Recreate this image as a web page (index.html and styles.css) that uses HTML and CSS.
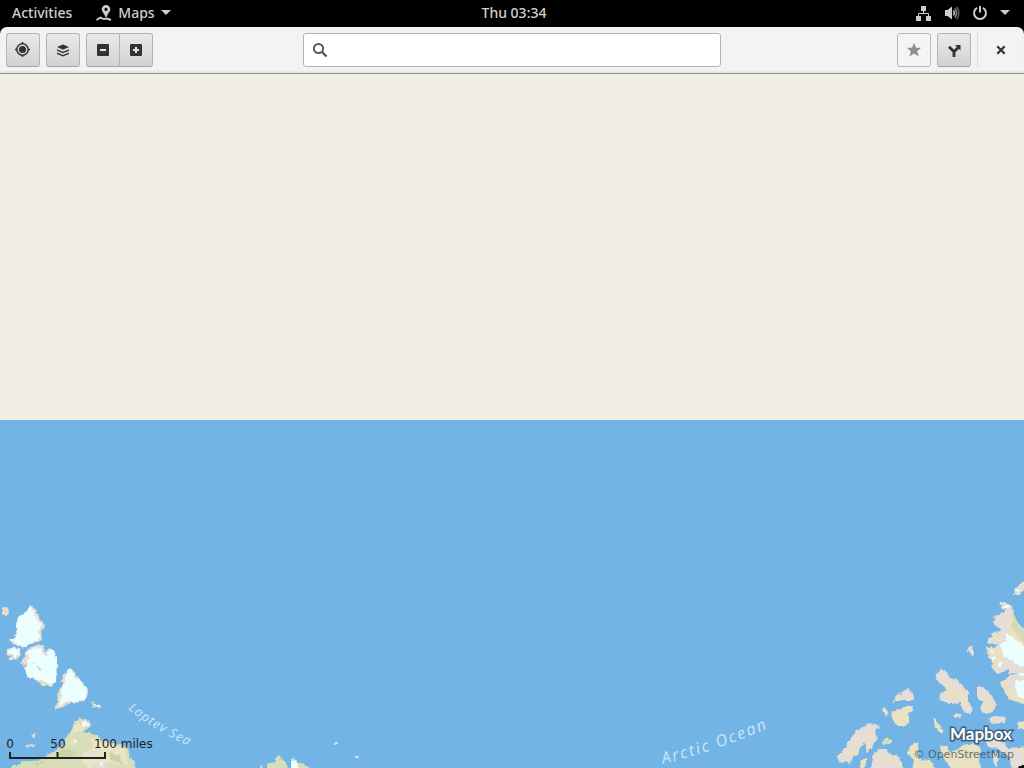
FILE: index.html
```html
<!DOCTYPE html>
<html lang="en">
<head>
<meta charset="utf-8">
<title>Maps</title>
<link rel="stylesheet" href="styles.css">
</head>
<body>
<div class="desktop">
  <nav class="topbar" aria-label="System">
    <div class="topbar-side">
      <button class="top-item" type="button">Activities</button>
      <button class="top-item" type="button">
        <svg width="16" height="16" viewBox="0 0 16 16" fill="#ccc" aria-hidden="true"><path fill-rule="evenodd" d="M10 0a4.300 4.300 0 0 0-4.300 4.300c0 2.700 2.800 4.200 3.700 7.700h1.200c.9-3.500 3.700-5 3.700-7.700A4.300 4.300 0 0 0 10 0zM10 2.700a1.600 1.600 0 1 1 0 3.200 1.600 1.600 0 0 1 0-3.200z"/><path d="M.5 15l4-2.500 3 1.500 3.500-.5 4 1.500" fill="none" stroke="#ccc" stroke-width="1.900"/></svg>
        <span>Maps</span>
        <svg width="10" height="6" viewBox="0 0 10 6" fill="#ccc" aria-hidden="true"><path d="M0 0h10L5 5z"/></svg>
      </button>
    </div>
    <button class="top-item" type="button">Thu 03:34</button>
    <div class="topbar-side topbar-end">
      <button class="top-item status" type="button" aria-label="System menu">
        <svg width="16" height="16" viewBox="0 0 16 16" fill="#ccc"><path d="M5 1h5v5H5zM0 11h5v5H0zM10 11h5v5h-5z"/><path d="M7.500 6v3M2.500 11V8.500h10V11" fill="none" stroke="#ccc"/></svg>
        <svg width="16" height="16" viewBox="0 0 16 16"><path d="M1 5h2.500L8 1.500v13L3.500 11H1z" fill="#ccc"/><path d="M9.500 5.500q1.500 2.500 0 5" fill="none" stroke="#ccc" stroke-width="1.500"/><path d="M11 3.500q3 4.500 0 9" fill="none" stroke="#888" stroke-width="1.700"/><path d="M12.800 1.800q4 6.200 0 12.400" fill="none" stroke="#555" stroke-width="1.700"/></svg>
        <svg width="16" height="16" viewBox="0 0 16 16" fill="none" stroke="#ccc" stroke-width="2"><path d="M5 2.800a6 6 0 1 0 6 0M8 1v6.500"/></svg>
        <svg width="10" height="6" viewBox="0 0 10 6" fill="#ccc"><path d="M0 0h10L5 5z"/></svg>
      </button>
    </div>
  </nav>

  <div class="window">
    <header class="headerbar">
      <div class="tools">
        <button class="btn" type="button" aria-label="Go to current location">
          <svg width="16" height="16" viewBox="0 0 16 16"><circle cx="7.500" cy="7.500" r="3.600" fill="#2e3436"/><circle cx="7.500" cy="7.500" r="5.700" fill="none" stroke="#2e3436" stroke-width="1.500"/><path d="M7.500 0v2M7.500 13v2M0 7.500h2M13 7.500h2" stroke="#2e3436" stroke-width="1.500"/></svg>
        </button>
        <button class="btn" type="button" aria-label="Layers">
          <svg width="16" height="16" viewBox="0 0 16 16" fill="#2e3436"><path d="M8 2.500l6 2.500-6 2.800L2 5zM2 7.300l6 2.500 6-2.500v1.400l-6 2.600-6-2.600zM2 10.600l6 2.500 6-2.500V12l-6 2.500L2 12z"/></svg>
        </button>
        <div class="linked">
          <button class="btn" type="button" aria-label="Zoom out">
            <svg width="16" height="16" viewBox="0 0 16 16"><rect x="2" y="2" width="12" height="12" rx="1" fill="#2e3436"/><path d="M5 8h6" stroke="#e4e4e3" stroke-width="2"/></svg>
          </button>
          <button class="btn" type="button" aria-label="Zoom in">
            <svg width="16" height="16" viewBox="0 0 16 16"><rect x="2" y="2" width="12" height="12" rx="1" fill="#2e3436"/><path d="M5 8h6M8 5v6" stroke="#e4e4e3" stroke-width="2"/></svg>
          </button>
        </div>
      </div>
      <label class="search">
        <svg width="16" height="16" viewBox="0 0 16 16" fill="none" stroke="#555a58" stroke-width="2"><circle cx="6.500" cy="6.500" r="4.600"/><path d="M10 10l4.500 4.500" stroke-width="2.400"/></svg>
        <input class="search-input" type="text" aria-label="Search places">
      </label>
      <div class="tools tools-end">
        <button class="btn btn-flat" type="button" aria-label="Favorite" disabled>
          <svg width="16" height="16" viewBox="0 0 16 16" fill="#8b8e8f"><path d="M8 .8l2 5h5.200l-4 3.500 1.500 5.200L8 11.500l-4.700 3 1.500-5.200-4-3.500H6z"/></svg>
        </button>
        <button class="btn" type="button" aria-label="Plan a route">
          <svg width="16" height="16" viewBox="0 0 16 16"><path d="M8 15V9.500M8 9.800L3 4.800M8 9.800l4.500-4.500" fill="none" stroke="#2e3436" stroke-width="2.800"/><path d="M9 3h5.500v5.500z" fill="#2e3436"/></svg>
        </button>
        <span class="separator"></span>
        <button class="close" type="button" aria-label="Close">
          <svg width="16" height="16" viewBox="0 0 16 16" stroke="#2e3436" stroke-width="2.200"><path d="M4.300 4.300l7.400 7.400M11.700 4.300l-7.400 7.400"/></svg>
        </button>
      </div>
    </header>

    <main class="map">
      <svg class="terrain terrain-west" width="400" height="200" viewBox="0 568 400 200" role="img" aria-label="Laptev Sea">
        <defs>
          <filter id="coast-west" x="0" y="568" width="400" height="204" filterUnits="userSpaceOnUse" color-interpolation-filters="sRGB"><feTurbulence type="fractalNoise" baseFrequency=".22" numOctaves="2" seed="4"/><feDisplacementMap in="SourceGraphic" scale="4" xChannelSelector="R" yChannelSelector="G"/></filter>
          <path id="laptev" d="M128 709Q156 732 196 749"/>
        </defs>
        <g filter="url(#coast-west)">
          <g fill="#e6ddd6">
            <circle cx="5" cy="611" r="4"/>
            <path d="M31 605l4 2 1 6 4 6 4 5 1 3-4 3 1 10-4 2-8 1-6 5-3 1-6-4-5-4-1-2 6-2-2-2 4-1-1-8 1-5 3-4 4-2 4-5z"/>
            <path d="M7 649l8-2 5 3 1 5-4 4-7 2-3-2 5-2-5-2z"/>
            <path d="M27 650l6-4 10-1 2 5-1 4 5-6 6 4 2 5-1 13v13l-4 3h-9l-6-6-9-2-2-5-1-6-4-4 3-6z"/>
            <path d="M72 669l2 3 1 5 3-1 2 5 6 6 2 5-1 6-5 4-10 1-12 4-5 4 2-9 1-9 4-10 1-8 5-3z"/>
            <path d="M92 703l3-2-1 3 6 1 1 3-7-1zM31 736l6-4-3 5zM26 745l9-1-2 2-7 1zM333 743l5-1v2l-4 1zM355 756h3v2h-3z"/>
          </g>
          <g fill="#ecffff">
            <path d="M31 606l3 8 4 7 4 5-3 2 1 11-8 3-8 6-6-3-8-6 7-3-1-10 2-9 9-6z"/>
            <path d="M7 650l8-2 4 2v5l-4 3-5 1 5-3-7-3z"/>
            <path d="M29 650l12-3 3 8h3l3-6 5 4 2 6-1 24-7 2-9-6-12-1-3-8 3-7 1-6-3-2z"/>
            <path d="M72 670l2 8 4 2 1-2 6 9 2 5-1 6-5 3-16 2-6 2 2-11 4-16 2-7 4-2zM94 704l6 1-1 2z"/>
          </g>
          <path d="M41 679l5 5 1 2-5-1zM58 702l1-8 2-2-1 10zM4 608l4 2-1 4z" fill="#e6dfbd"/>
          <path d="M32 661l4 2-2 1zM36 665l5 3v3l-3-1z" fill="#dfd8d2"/>
          <path fill="#d8deb8" d="M75 721l5-3 10 4v5l-7 5 14 3 3 5 13 3 15 4 2 10 5 5 1 10H8v-2l4-4 8-2 2-3h15l6-4 10-5 10-7 2-6 7-10z"/>
          <path fill="#ebe5c7" d="M76 724l11 1-5 6-12 2zM90 737l9 5 12 2 14 5 3 16-22-3-16 6-10-9 5-7 8-4zM70 740l8-1-2 7z"/>
          <path fill="#c9d4ab" d="M63 748l14 4-5 5-18 4zM108 752l10 3 7 10-12-4zM30 763l14-1-5 4z"/>
          <path fill="#e4dcd4" d="M81 719l9 3v4l-8-2zM71 739l7 1-3 4zM88 751l11 0-6 6zM96 762l14 1-5 5H95z"/>
          <path fill="#ecffff" d="M82 721l6 2v3l-5-1zM99 763l5-1-3 4zM74 740l3 1-2 2z"/>
          <path fill="#d8deb8" d="M259 770l2-6 2 6zM268 764l6-2 4-7 4 4 5 5 1 6h-22zM293 757l6 6 6 1 7 6h-19z"/>
          <path fill="#ecffff" d="M291 760l6 1 2 9h-8z"/>
        </g>
        <text class="sea-label sea-small"><textPath href="#laptev">Laptev Sea</textPath></text>
        <g class="scale-label"><text x="10" y="748" text-anchor="middle">0</text><text x="58" y="748" text-anchor="middle">50</text><text x="94" y="748">100 miles</text></g>
        <path d="M10 752v6h95v-6M57.500 752v6" fill="none" stroke="#222" stroke-width="2"/>
      </svg>

      <svg class="terrain terrain-east" width="400" height="200" viewBox="624 568 400 200" role="img" aria-label="Arctic Ocean">
        <defs>
          <filter id="coast-east" x="624" y="568" width="404" height="204" filterUnits="userSpaceOnUse" color-interpolation-filters="sRGB"><feTurbulence type="fractalNoise" baseFrequency=".22" numOctaves="2" seed="9"/><feDisplacementMap in="SourceGraphic" scale="4" xChannelSelector="R" yChannelSelector="G"/></filter>
          <path id="arctic" d="M663 764Q720 750 780 723"/>
        </defs>
        <path d="M909.500 677v66" stroke="#86b5dd"/>
        <g filter="url(#coast-east)">
          <g fill="#e6ddd6">
            <path d="M892 702l5-7 5-2 5-5 6 5 1 7-9 0-5-1z"/>
            <path d="M870 723l8 2 1 3-4 2 2 10-5 7-4 6-3-2 1-8-6 4-2 8-5 2-3 7-5-2-5 1-3-6 8-9 5-8 7-10 6-3z"/>
            <path d="M868 770l5-10-1-3 6-8h9l1 4 7 2 5 3 4 12z"/>
            <path d="M935 673l7-4 5 4 3 5 7 1 6 8 5 3v10l5 8-3 6-7-2-2-9-11 1-10-4-1-6 8-1-2-6-8-6z"/>
            <path d="M977 687h6l5 5 4 4 4 7-2 9-9 2-5-4 3-7-6-6z"/>
            <path d="M988 719l7-3 11 1-1 6-13 1zM967 648l6-2 1 11-5-4zM1013 595l4-8 10-8v9l-9 7z"/>
            <path d="M985 740l7-2 13 4 1 6 14-1 8-2v27h-17l-1-14-12-9-10-3zM993 753l4-1 2 7-3 8-3-5z"/>
            <path d="M999 603l6-1 7 4 1 6 5 11 10 10v73l-16-6-7-9-5-8 8-6 9-4-8 1-1-5-10 5-6-5 1-5-5-8-2-8h7l4-3-10-3v-3l6-1-2-6 11-1-9-8 2-7 7-2 3-4z"/>
          </g>
          <g fill="#e9e2c2">
            <path d="M892 702l6-6 5 0 1 4zM892 712l13-5h8l-1 4-4 2 2 9-7 5-8-4-3-5zM882 710l3-2 4 5-3 4z"/>
            <path d="M882 741l4-3 6 2 0 3-7 1zM858 770l4-10 5-3-2 13zM907 753l6-11h5l1 17 12 1 5 10h-24l2-10z"/>
            <path d="M933 716l4 6 3 3 4 8h-5l-4-6zM953 716l4-3 4 3-4 2zM1017 723l11-4v11l-9-1z"/>
            <path d="M940 745l7 2 1 5 9-2 6-5 12-2 6 7-2 10 2 10h-29l-7-10-4-7z"/>
            <path d="M858 745l-3 10-8 1 6-10zM867 732l3 8-2 9-2-5zM880 757l12 0 6 6-17-2zM947 678l6 10 9 2 3 12-5 1-3-8-8 4-4-5zM980 689l5 5 5 8 4 8-9 2 2-9zM993 718l3 4h-4z"/>
            <path d="M1009 611l6 10 13 12v16l-18-9-4-12 4-7zM987 648l10-1 7 9-3 14-7-3-1-9zM1000 680l8 2 1 8 19 5v10l-20-6zM993 632l6 1 2 7-8-2zM1018 749l10-1v9z"/>
          </g>
          <path fill="#d3d9b3" d="M1013 613l6 14 9 7v14l-9-11-7-8zM884 740l6 0-1 2-5 1zM962 756l12-5-3 8zM912 756l5-7 1 8z"/>
          <g fill="#ecffff">
            <path d="M1005 632l8 5 15 13v18l-11-3-6-4-8-6-3-10 7-3zM1014 681h4l10-1v19l-10-3zM998 662h4v4h-4zM991 656h4v4h-4zM1015 591l4-4v5zM971 650h2v3h-2zM1004 606h5v2h-5zM1018 673h10v3h-10zM990 650l4 1-2 2z"/>
          </g>
        </g>
        <text class="sea-label sea-large"><textPath href="#arctic">Arctic Ocean</textPath></text>
        <path d="M1018 768l1-2h2l1-1h2v3z" fill="#111"/>
      </svg>

      <footer class="attribution">
        <strong class="mapbox">Mapbox</strong>
        <a class="osm" href="#copyright">© OpenStreetMap</a>
      </footer>
    </main>
  </div>
</div>
</body>
</html>
```
FILE: styles.css
```css
* { box-sizing: border-box; }
body { margin: 0; }
button { font: inherit; color: inherit; cursor: pointer; }

.desktop {
  display: flex;
  flex-direction: column;
  height: 100vh;
  overflow: hidden;
  background: #000;
  color: #d0d0d0;
  font: 500 14px/20px "Noto Sans", "Open Sans", sans-serif;
}

.topbar {
  display: grid;
  grid-template-columns: 1fr auto 1fr;
  align-items: center;
  height: 27px;
  padding-bottom: 2px;
}
.topbar-side { display: flex; gap: 4px; }
.topbar-end { justify-content: flex-end; }
.top-item {
  display: flex;
  align-items: center;
  gap: 6px;
  padding: 0 8px 0 12px;
  border: 0;
  background: none;
}
.status { gap: 12px; padding-right: 14px; }

.window {
  flex: 1;
  display: flex;
  flex-direction: column;
  min-height: 0;
}
.headerbar {
  display: grid;
  grid-template-columns: 1fr minmax(200px, 418px) 1fr;
  align-items: center;
  gap: 6px;
  height: 47px;
  padding: 0 6px;
  border-bottom: 1px solid #8c8e88;
  border-radius: 7px 7px 0 0;
  background: #f3f3f3;
  box-shadow: inset 0 -2px 1px #e8e8e7;
}
.tools { display: flex; align-items: center; gap: 6px; }
.tools-end { justify-content: flex-end; }
.linked { display: flex; }
.btn {
  display: grid;
  place-items: center;
  width: 34px;
  height: 34px;
  padding: 0;
  border: 1px solid #b4b4b1;
  border-bottom-color: #a2a29f;
  border-radius: 3px;
  background: linear-gradient(#e9e9e8, #d2d2d0);
}
.linked .btn:first-child { border-radius: 3px 0 0 3px; }
.linked .btn:last-child { margin-left: -1px; border-radius: 0 3px 3px 0; }
.btn-flat { background: #f4f4f3; border-color: #b8b8b5; }
.separator { width: 1px; height: 34px; background: #dcdcda; }
.close {
  display: grid;
  place-items: center;
  width: 34px;
  height: 34px;
  padding: 0;
  border: 0;
  background: none;
}

.search {
  display: flex;
  align-items: center;
  gap: 8px;
  height: 34px;
  padding: 0 8px;
  border: 1px solid #b4b4b1;
  border-radius: 3px;
  background: #fff;
}
.search-input {
  flex: 1;
  min-width: 0;
  border: 0;
  outline: 0;
  background: none;
  font: inherit;
  color: #2e3436;
}

.map {
  position: relative;
  flex: 1;
  min-height: 0;
  overflow: hidden;
  background: linear-gradient(to top, #73b4e6 348px, #f1eee8 348px);
}
.terrain { position: absolute; bottom: 0; }
.terrain-west { left: 0; }
.terrain-east { right: 0; }

.sea-label {
  fill: #cbe6fb;
  font-family: "Open Sans", "Noto Sans", sans-serif;
  font-style: italic;
}
.sea-small { font-size: 13px; letter-spacing: 1px; }
.sea-large { font-size: 16px; letter-spacing: 2px; }
.scale-label {
  fill: #222;
  font: 12px "DejaVu Sans", sans-serif;
}

.attribution {
  position: absolute;
  right: 10px;
  bottom: 5px;
  display: flex;
  flex-direction: column;
  align-items: flex-end;
}
.mapbox {
  padding-right: 2px;
  color: #fff;
  font: 700 17px/26px Lato, "Open Sans", sans-serif;
  -webkit-text-stroke: 3px #3f6080;
  paint-order: stroke fill;
}
.osm {
  color: rgba(50, 60, 70, 0.7);
  font: 11px/16px "DejaVu Sans", sans-serif;
  text-decoration: none;
}
```
